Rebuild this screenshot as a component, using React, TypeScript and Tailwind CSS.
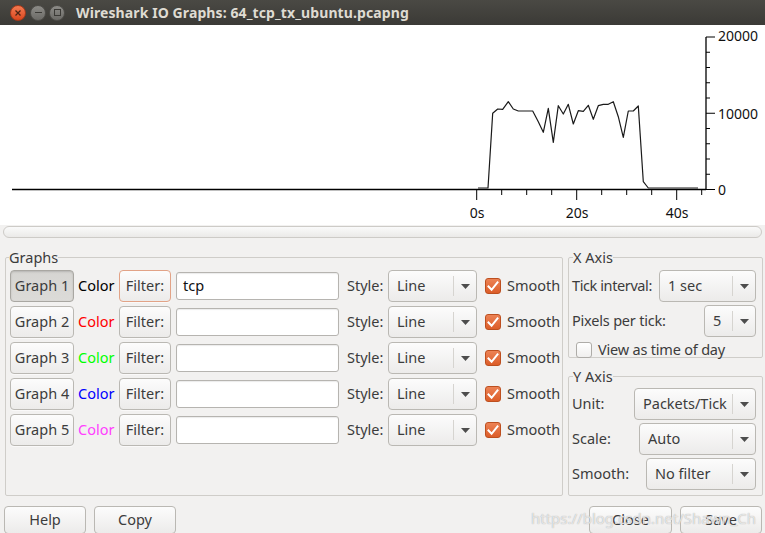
import React from "react";

const F = "[font-family:'Noto_Sans',sans-serif]";

const pts: [number, number][] = [
  [478, 163], [488, 163], [492.7, 88.3], [497.7, 84], [502.7, 84.3], [508.3, 76.7], [513.3, 84], [518.3, 86],
  [532.7, 86], [538.3, 96.7], [543.3, 107.3], [548.3, 83.3], [553.3, 117.3], [558.3, 80.7], [563.3, 89],
  [568.3, 79.3], [573.3, 99], [578.3, 85.7], [583.3, 86.3], [588.3, 80.3], [593.3, 94.3], [598.3, 80.7],
  [603.3, 79.3], [608.3, 79.3], [613.3, 76.7], [618.3, 91.7], [623.3, 112.3], [628.3, 86], [633.3, 86],
  [638.3, 81], [643.3, 156.7], [648.3, 163], [698, 163],
];

function Chart() {
  const yTicks = Array.from({ length: 11 }, (_, i) => 12 + i * 15.25);
  const xTicks = Array.from({ length: 10 }, (_, k) => 476.7 + k * 25);
  return (
    <svg width="765" height="200" viewBox="0 0 765 200" className="block">
      <line x1="12" y1="164.5" x2="706" y2="164.5" stroke="#000" strokeWidth="1.3" />
      <line x1="706" y1="12" x2="706" y2="165" stroke="#000" strokeWidth="1.3" />
      {yTicks.map((y, i) => (
        <line key={i} x1="706" y1={y} x2={i % 5 === 0 ? 715 : 710} y2={y} stroke="#000" strokeWidth="1" />
      ))}
      {xTicks.map((x, k) => (
        <line key={k} x1={x} y1="164.5" x2={x} y2={k % 4 === 0 ? 175 : 170} stroke="#000" strokeWidth="1" />
      ))}
      <polyline
        points={pts.map((p) => p.join(",")).join(" ")}
        fill="none"
        stroke="#1a1a1a"
        strokeWidth="1.2"
        strokeLinejoin="round"
      />
      <g fontFamily="'Noto Sans', sans-serif" fontSize="14" fill="#111">
        <text x="718" y="16">20000</text>
        <text x="718" y="94">10000</text>
        <text x="718" y="170">0</text>
        <text x="477" y="193" textAnchor="middle">0s</text>
        <text x="577" y="193" textAnchor="middle">20s</text>
        <text x="677" y="193" textAnchor="middle">40s</text>
      </g>
    </svg>
  );
}

function Btn({ children, className = "", pressed = false, focus = false }: { children: React.ReactNode; className?: string; pressed?: boolean; focus?: boolean }) {
  const base = pressed
    ? "bg-gradient-to-b from-[#d6d5d2] to-[#dcdbd8] border-[#a9a7a2] shadow-[inset_0_1px_2px_rgba(0,0,0,0.15)]"
    : "bg-gradient-to-b from-[#fcfcfc] to-[#ecebea] border-[#bab8b3] shadow-[0_1px_0_rgba(255,255,255,0.6)]";
  const fc = focus ? "border-[#e2a387]" : "";
  return (
    <div className={`shrink-0 flex items-center justify-center rounded-[4px] border ${base} ${fc} text-[#3c3c3c] whitespace-nowrap ${className}`}>
      {children}
    </div>
  );
}

function Combo({ value, className = "" }: { value: string; className?: string }) {
  return (
    <div className={`shrink-0 h-[32px] flex items-center rounded-[4px] border border-[#bab8b3] bg-gradient-to-b from-[#fcfcfc] to-[#ecebea] text-[#3c3c3c] ${className}`}>
      <span className="flex-1 pl-[8px] whitespace-nowrap overflow-hidden">{value}</span>
      <span className="w-px h-[20px] bg-[#d6d4d0]" />
      <span className="w-[22px] flex items-center justify-center">
        <svg width="9" height="5" viewBox="0 0 9 5"><path d="M0 0h9L4.5 5z" fill="#4d4d4d" /></svg>
      </span>
    </div>
  );
}

function Check({ checked }: { checked: boolean }) {
  if (!checked)
    return <span className="shrink-0 w-[16px] h-[16px] rounded-[3px] border border-[#aeaca8] bg-gradient-to-b from-[#ffffff] to-[#f0efee] inline-block" />;
  return (
    <span className="shrink-0 w-[16px] h-[16px] rounded-[3px] border border-[#bd4f1f] bg-gradient-to-b from-[#ec8254] to-[#dc5d28] flex items-center justify-center">
      <svg width="12" height="11" viewBox="0 0 12 11">
        <path d="M1.5 5.5 L4.6 8.8 L10.5 1.5" fill="none" stroke="#fff" strokeWidth="2" strokeLinecap="square" />
      </svg>
    </span>
  );
}

const rows = [
  { n: 1, color: "text-[#000000]", filter: "tcp" },
  { n: 2, color: "text-[#ff0000]", filter: "" },
  { n: 3, color: "text-[#00ff00]", filter: "" },
  { n: 4, color: "text-[#0000ff]", filter: "" },
  { n: 5, color: "text-[#ff40ff]", filter: "" },
];

export default function App() {
  return (
    <div className={`w-[765px] h-[533px] overflow-hidden bg-[#f2f1f0] flex flex-col relative text-[14.5px] text-[#3c3c3c] ${F}`}>
      {/* Title bar */}
      <div className="h-[25px] shrink-0 bg-gradient-to-b from-[#4a4944] to-[#3b3a36] flex items-center pl-[10px]">
        <div className="w-[16px] h-[16px] rounded-full bg-gradient-to-b from-[#f47a51] to-[#d9461c] border border-[#a7391a] flex items-center justify-center">
          <svg width="6" height="6" viewBox="0 0 6 6"><path d="M0.5 0.5L5.5 5.5M5.5 0.5L0.5 5.5" stroke="#4a2414" strokeWidth="1.3" /></svg>
        </div>
        <div className="ml-[4px] w-[16px] h-[16px] rounded-full bg-gradient-to-b from-[#8d8c88] to-[#6b6a66] border border-[#4e4d49] flex items-center justify-center">
          <span className="w-[7px] h-[1.5px] bg-[#3b3a36]" />
        </div>
        <div className="ml-[3px] w-[16px] h-[16px] rounded-full bg-gradient-to-b from-[#8d8c88] to-[#6b6a66] border border-[#4e4d49] flex items-center justify-center">
          <span className="w-[7px] h-[7px] border border-[#3b3a36]" />
        </div>
        <span className="ml-[11px] text-[#dfdbd2] font-bold text-[14px] tracking-[0.1px] whitespace-nowrap">Wireshark IO Graphs: 64_tcp_tx_ubuntu.pcapng</span>
      </div>

      {/* Chart */}
      <div className="h-[200px] shrink-0 bg-white">
        <Chart />
      </div>

      {/* Scrollbar */}
      <div className="mt-[1px] mx-[3px] h-[12px] shrink-0 rounded-full border border-[#cdcbc7] bg-gradient-to-b from-[#fafafa] to-[#ebeae8]" />

      {/* Main */}
      <div className="flex px-[5px] mt-[11px]">
        <fieldset className="shrink-0 min-w-0 w-[558px] h-[247px] border border-[#cfcdc9] rounded-[2px] px-[4px] overflow-visible">
          <legend className="-ml-[1px] leading-[17px]">Graphs</legend>
          <div className="pt-[4px] flex flex-col gap-[4px]">
            {rows.map((r) => (
              <div key={r.n} className="h-[32px] flex items-center whitespace-nowrap">
                <Btn className="w-[64px] h-[32px]" pressed={r.n === 1}>Graph {r.n}</Btn>
                <span className={`shrink-0 ml-[4px] w-[37px] ${r.color}`}>Color</span>
                <Btn className="ml-[4px] w-[52px] h-[32px]" focus={r.n === 1}>Filter:</Btn>
                <div className="shrink-0 ml-[5px] w-[163px] h-[28px] rounded-[3px] border border-[#b6b4b0] bg-white shadow-[inset_0_1px_1px_rgba(0,0,0,0.08)] flex items-center pl-[6px] text-[#111]">
                  {r.filter}
                </div>
                <span className="shrink-0 ml-[8px] w-[36px]">Style:</span>
                <Combo value="Line" className="ml-[5px] w-[89px]" />
                <span className="ml-[8px]"><Check checked /></span>
                <span className="ml-[6px]">Smooth</span>
              </div>
            ))}
          </div>
        </fieldset>

        <div className="ml-[5px] shrink-0 w-[195px] flex flex-col">
          <fieldset className="min-w-0 h-[109px] border border-[#cfcdc9] rounded-[2px] pl-[3px] pr-[6px]">
            <legend className="ml-[1px] leading-[17px]">X Axis</legend>
            <div className="pt-[4px] flex flex-col whitespace-nowrap">
              <div className="h-[32px] flex items-center">
                <span className="tracking-[-0.4px]">Tick interval:</span>
                <Combo value="1 sec" className="ml-auto w-[97px]" />
              </div>
              <div className="mt-[3px] h-[32px] flex items-center">
                <span className="tracking-[-0.2px]">Pixels per tick:</span>
                <Combo value="5" className="ml-auto w-[52px]" />
              </div>
              <div className="mt-[2px] flex items-center pl-[4px]">
                <Check checked={false} />
                <span className="ml-[6px] tracking-[-0.2px]">View as time of day</span>
              </div>
            </div>
          </fieldset>
          <fieldset className="min-w-0 mt-[10px] h-[128px] border border-[#cfcdc9] rounded-[2px] pl-[3px] pr-[6px]">
            <legend className="ml-[1px] leading-[17px]">Y Axis</legend>
            <div className="pt-[3px] flex flex-col gap-[3px] whitespace-nowrap">
              <div className="h-[32px] flex items-center">
                <span>Unit:</span>
                <Combo value="Packets/Tick" className="ml-auto w-[122px]" />
              </div>
              <div className="h-[32px] flex items-center">
                <span>Scale:</span>
                <Combo value="Auto" className="ml-auto w-[117px]" />
              </div>
              <div className="h-[32px] flex items-center">
                <span>Smooth:</span>
                <Combo value="No filter" className="ml-auto w-[110px]" />
              </div>
            </div>
          </fieldset>
        </div>
      </div>

      {/* Bottom buttons */}
      <div className="mt-[10px] flex pl-[4px] pr-[3px]">
        <Btn className="w-[82px] h-[28px]">Help</Btn>
        <Btn className="ml-[8px] w-[82px] h-[28px]">Copy</Btn>
        <div className="flex-1" />
        <Btn className="w-[83px] h-[28px]">Close</Btn>
        <Btn className="ml-[8px] w-[82px] h-[28px]">Save</Btn>
      </div>

      {/* Watermark */}
      <div className="absolute left-[531px] top-[507px] text-[15px] text-white/70 [text-shadow:0_0_1px_#9a9a9a] whitespace-nowrap pointer-events-none">
        https://blog.csdn.net/Shawn_Ch
      </div>
    </div>
  );
}
